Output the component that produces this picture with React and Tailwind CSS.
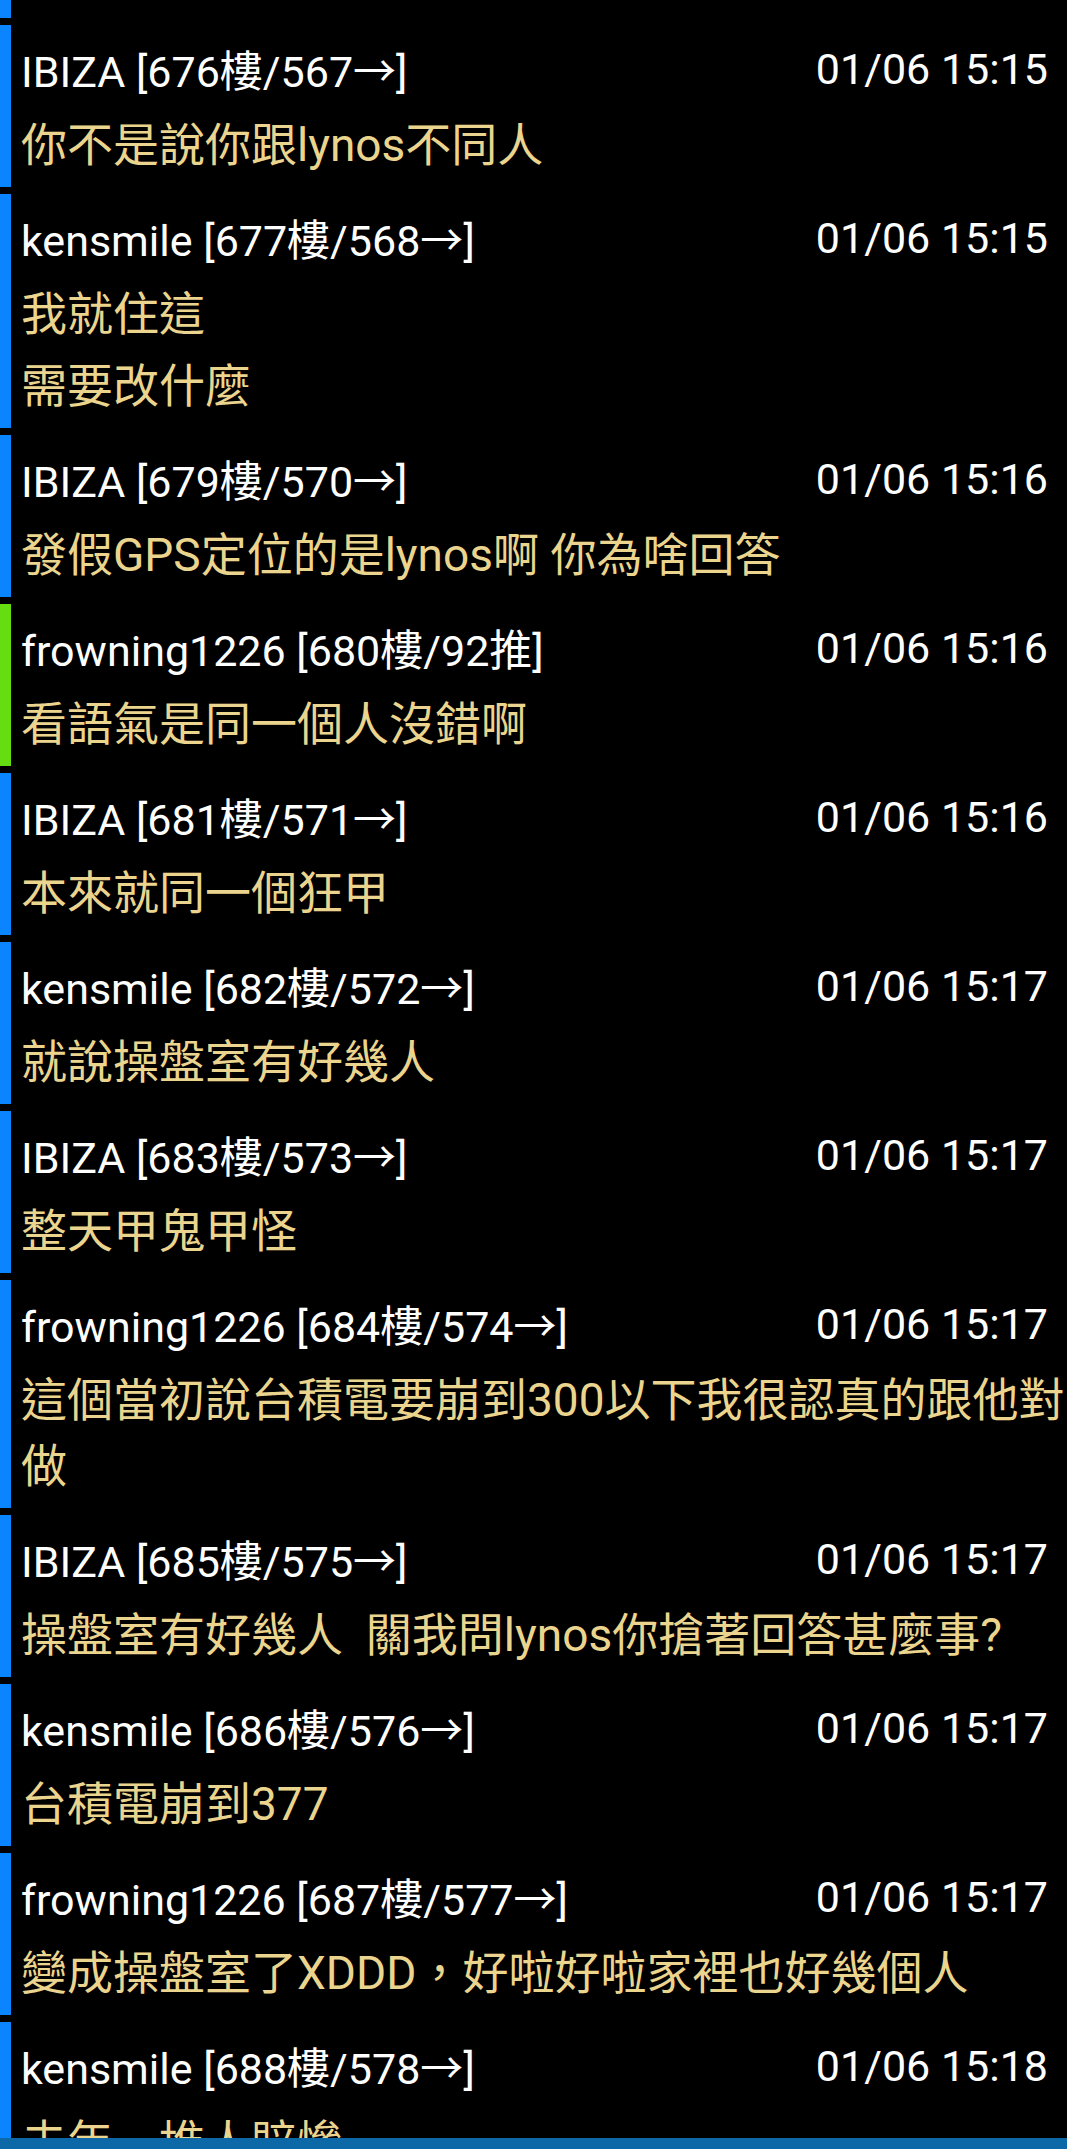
const POSTS = [
  { user: "IBIZA", floor: "676樓/567→", time: "01/06 15:15", lines: ["你不是說你跟lynos不同人"] },
  { user: "kensmile", floor: "677樓/568→", time: "01/06 15:15", lines: ["我就住這", "需要改什麼"] },
  { user: "IBIZA", floor: "679樓/570→", time: "01/06 15:16", lines: ["發假GPS定位的是lynos啊 你為啥回答"] },
  { user: "frowning1226", floor: "680樓/92推", time: "01/06 15:16", lines: ["看語氣是同一個人沒錯啊"], push: true },
  { user: "IBIZA", floor: "681樓/571→", time: "01/06 15:16", lines: ["本來就同一個狂甲"] },
  { user: "kensmile", floor: "682樓/572→", time: "01/06 15:17", lines: ["就說操盤室有好幾人"] },
  { user: "IBIZA", floor: "683樓/573→", time: "01/06 15:17", lines: ["整天甲鬼甲怪"] },
  { user: "frowning1226", floor: "684樓/574→", time: "01/06 15:17", lines: ["這個當初說台積電要崩到300以下我很認真的跟他對做"] },
  { user: "IBIZA", floor: "685樓/575→", time: "01/06 15:17", lines: ["操盤室有好幾人  關我問lynos你搶著回答甚麼事?"] },
  { user: "kensmile", floor: "686樓/576→", time: "01/06 15:17", lines: ["台積電崩到377"] },
  { user: "frowning1226", floor: "687樓/577→", time: "01/06 15:17", lines: ["變成操盤室了XDDD，好啦好啦家裡也好幾個人"] },
  { user: "kensmile", floor: "688樓/578→", time: "01/06 15:18", lines: ["去年一堆人賠慘"] },
];

const FONT = "font-['Roboto','Noto_Sans_CJK_TC',sans-serif]";

function PostRow({ post }) {
  return (
    <div
      className={`shrink-0 border-l-[11px] pl-[10px] pt-[22px] pb-[9px] ${
        post.push ? "border-[#66dd11]" : "border-[#0a84ff]"
      }`}
    >
      <div className="flex items-start justify-between text-[43px] leading-[50px] text-white">
        <span>
          {post.user} [{post.floor}]
        </span>
        <span className="mr-[19px] -mt-[3px]">{post.time}</span>
      </div>
      <div className="mt-[15px] flex flex-col gap-[6px] whitespace-pre-wrap text-[46px] leading-[66px] text-[#ebd58e]">
        {post.lines.map((line, i) => (
          <p key={i}>{line}</p>
        ))}
      </div>
    </div>
  );
}

export default function App() {
  return (
    <div className={`flex h-[2149px] flex-col overflow-hidden bg-black ${FONT}`}>
      <div className="flex flex-1 flex-col gap-[7px] overflow-hidden">
        <div className="h-[18px] shrink-0 border-l-[11px] border-[#0a84ff]" />
        {POSTS.map((post) => (
          <PostRow key={post.floor} post={post} />
        ))}
      </div>
      <div className="h-[11px] shrink-0 bg-[#0c68a6]" />
    </div>
  );
}
